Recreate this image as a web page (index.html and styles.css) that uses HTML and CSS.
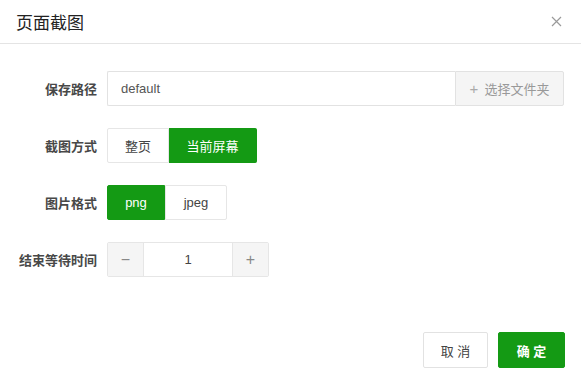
FILE: index.html
```html
<html lang="zh">
<head>
  <meta charset="UTF-8" />
  <title>页面截图</title>
  <link rel="stylesheet" href="styles.css">
</head>
<body>
  <div class="dialog">
    <div class="dialog-header">
      <span class="dialog-title">页面截图</span>
      <span class="dialog-close">
        <svg width="11" height="11" viewBox="0 0 11 11"><path d="M1 1L10 10M10 1L1 10" stroke="#9a9a9a" stroke-width="1.2" fill="none"/></svg>
      </span>
    </div>

    <div class="dialog-body">
      <div class="form-row">
        <label class="form-label">保存路径</label>
        <div class="input-group">
          <input class="text-input" type="text" value="default">
          <button class="append-btn"><span class="plus">+</span>选择文件夹</button>
        </div>
      </div>

      <div class="form-row">
        <label class="form-label">截图方式</label>
        <div class="radio-group">
          <span class="radio-btn">整页</span>
          <span class="radio-btn active wide">当前屏幕</span>
        </div>
      </div>

      <div class="form-row">
        <label class="form-label">图片格式</label>
        <div class="radio-group">
          <span class="radio-btn active">png</span>
          <span class="radio-btn">jpeg</span>
        </div>
      </div>

      <div class="form-row">
        <label class="form-label">结束等待时间</label>
        <div class="number-input">
          <span class="num-btn">&minus;</span>
          <span class="num-value">1</span>
          <span class="num-btn">+</span>
        </div>
      </div>
    </div>

    <div class="dialog-footer">
      <button class="btn">取 消</button>
      <button class="btn btn-primary">确 定</button>
    </div>
  </div>
</body>
</html>
```

FILE: styles.css
```css
body {
  margin: 0;
  background: #fff;
  font-family: "Liberation Sans", "Noto Sans CJK SC", sans-serif;
  color: #333;
}
.dialog {
  width: 581px;
  height: 383px;
  display: flex;
  flex-direction: column;
  background: #fff;
}
.dialog-header {
  height: 44px;
  box-sizing: border-box;
  border-bottom: 1px solid #e4e4e4;
  display: flex;
  align-items: center;
  justify-content: space-between;
  padding: 0 19px 0 16px;
}
.dialog-title {
  font-size: 17px;
  color: #222;
}
.dialog-close {
  display: flex;
}
.dialog-body {
  padding-top: 27px;
  display: flex;
  flex-direction: column;
  gap: 22px;
}
.form-row {
  display: flex;
  align-items: center;
  height: 35px;
}
.form-label {
  width: 97px;
  padding-right: 10px;
  text-align: right;
  font-size: 13px;
  font-weight: bold;
  color: #484848;
}
.input-group {
  display: flex;
  height: 35px;
}
.text-input {
  width: 348px;
  height: 35px;
  box-sizing: border-box;
  border: 1px solid #e2e2e2;
  border-right: none;
  border-radius: 2px 0 0 2px;
  padding: 0 13px;
  font-family: inherit;
  font-size: 13px;
  color: #555;
  outline: none;
}
.append-btn {
  width: 109px;
  height: 35px;
  box-sizing: border-box;
  border: 1px solid #e2e2e2;
  border-radius: 0 2px 2px 0;
  background: #f5f5f5;
  font-family: inherit;
  font-size: 13px;
  color: #999;
  padding: 0;
}
.plus {
  font-size: 15px;
  color: #aaa;
  margin-right: 6px;
}
.radio-group {
  display: flex;
  height: 35px;
}
.radio-btn {
  width: 62px;
  box-sizing: border-box;
  border: 1px solid #e6e6e6;
  display: flex;
  align-items: center;
  justify-content: center;
  font-size: 13px;
  color: #444;
  background: #fff;
}
.radio-btn:first-child {
  border-radius: 2px 0 0 2px;
}
.radio-btn:last-child {
  border-radius: 0 2px 2px 0;
}
.radio-btn.wide {
  width: 88px;
}
.radio-group .radio-btn:first-child:not(.active) + .radio-btn {
  border-left: none;
}
.radio-btn.active {
  background: #149a14;
  border-color: #149a14;
  color: #fff;
}
.radio-btn.active:first-child {
  width: 58px;
}
.number-input {
  display: flex;
  height: 35px;
  box-sizing: border-box;
  border: 1px solid #e6e6e6;
  border-radius: 2px;
}
.num-btn {
  width: 35px;
  display: flex;
  align-items: center;
  justify-content: center;
  background: #f5f5f5;
  color: #888;
  font-size: 16px;
}
.num-value {
  width: 88px;
  border-left: 1px solid #e6e6e6;
  border-right: 1px solid #e6e6e6;
  display: flex;
  align-items: center;
  justify-content: center;
  font-size: 13px;
  color: #444;
}
.dialog-footer {
  margin-top: auto;
  display: flex;
  justify-content: flex-end;
  gap: 10px;
  padding: 0 16px 15px 0;
}
.btn {
  width: 65px;
  height: 36px;
  box-sizing: border-box;
  border: 1px solid #e2e2e2;
  border-radius: 2px;
  background: #fff;
  font-family: inherit;
  font-size: 13px;
  color: #444;
}
.btn-primary {
  width: 67px;
  background: #149a14;
  border-color: #149a14;
  color: #fff;
  font-weight: bold;
}
```
